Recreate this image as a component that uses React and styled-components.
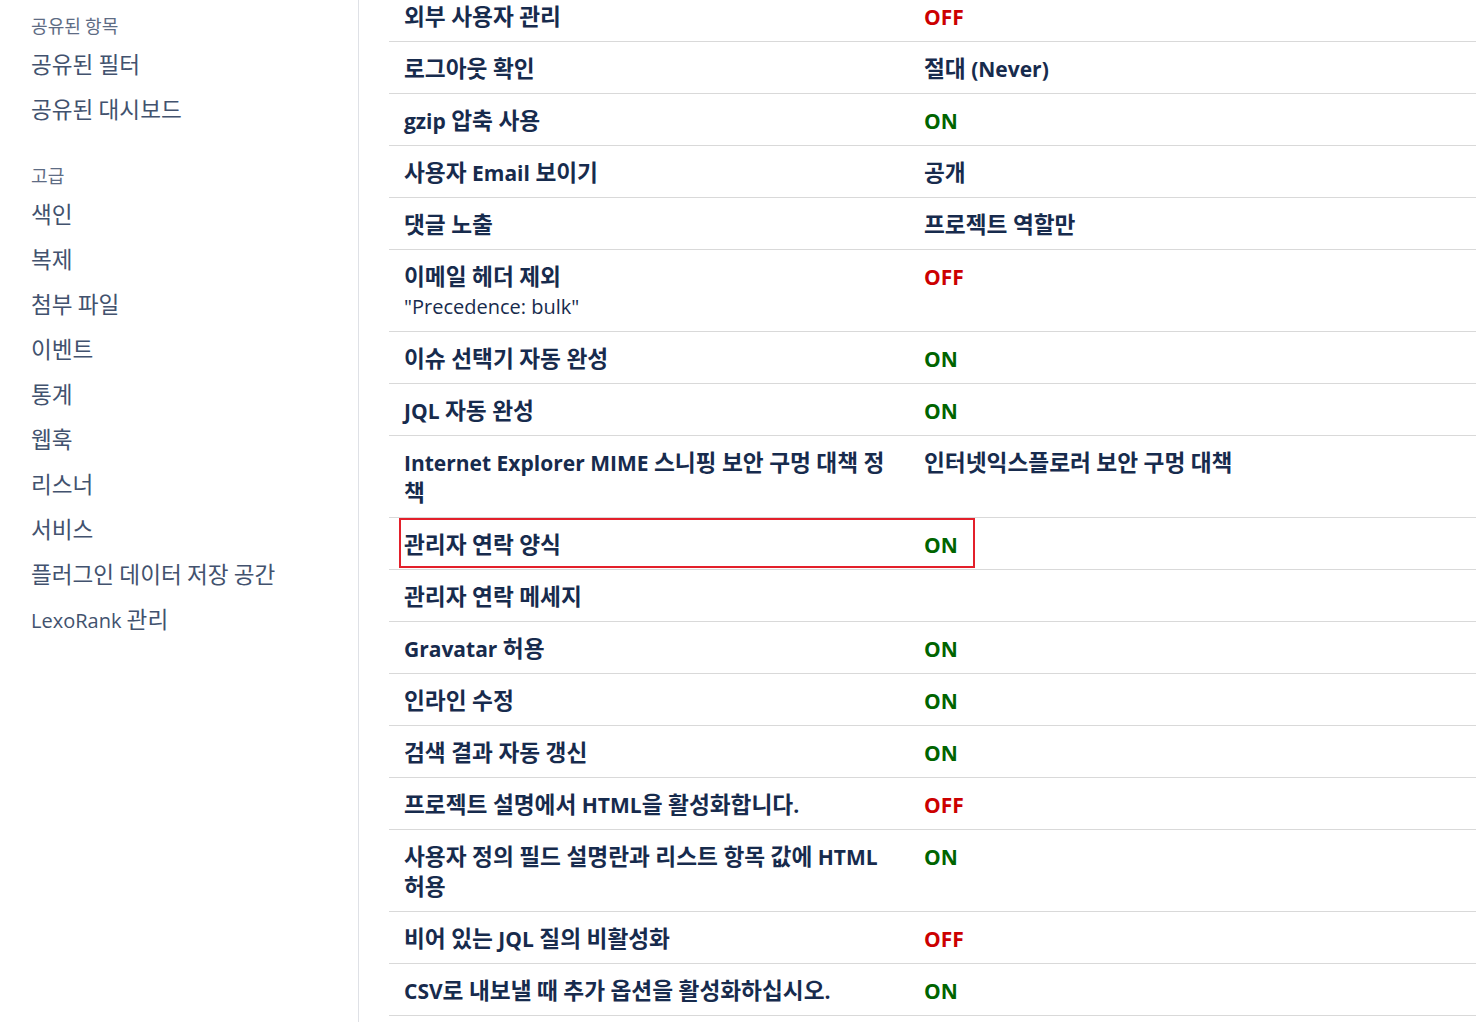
import React from "react";
import styled, { createGlobalStyle } from "styled-components";

const GlobalStyle = createGlobalStyle`
  html, body {
    margin: 0;
    padding: 0;
    background: #fff;
    overflow: hidden;
  }
  body {
    font-family: "Open Sans", "Noto Sans CJK KR", sans-serif;
    color: #172b4d;
  }
`;

const Page = styled.div`
  display: flex;
  align-items: stretch;
  min-height: 1022px;
`;

const Sidebar = styled.nav`
  width: 359px;
  flex: none;
  border-right: 1px solid #dfe1e6;
  padding: 16px 0 0 31px;
  box-sizing: border-box;
`;

const Group = styled.div`
  margin-bottom: ${(p) => p.gap || 0}px;
`;

const GroupTitle = styled.div`
  font-size: 16px;
  line-height: 22px;
  color: #5e6c84;
  margin-bottom: 5px;
`;

const NavItem = styled.a`
  display: block;
  font-size: 20px;
  line-height: 45px;
  color: #42526e;
  text-decoration: none;
  cursor: pointer;
`;

// Hangul runs are drawn a little larger, as the reference's Korean face is wider
const Ko = styled.span`
  font-family: "Noto Sans CJK KR", sans-serif;
  font-size: var(--ko, 1.13em);
  line-height: 0;
`;

const Main = styled.main`
  flex: 1;
  padding-left: 30px;
  min-width: 0;
`;

const Table = styled.div`
  margin-top: -10px;
`;

const Row = styled.div`
  position: relative;
  display: grid;
  grid-template-columns: 520px 1fr;
  border-bottom: 1px solid #d9d9d9;

  ${(p) =>
    p.marked &&
    `
    &::after {
      content: "";
      position: absolute;
      left: 10px;
      top: 0;
      width: 576px;
      height: 50px;
      border: 2px solid #e3202b;
      box-sizing: border-box;
      pointer-events: none;
    }
  `}
`;

const Label = styled.div`
  --ko: 1.08em;
  padding: 12px 17px 9px 15px;
  font-size: 21px;
  line-height: 30px;
  font-weight: 700;
  color: #172b4d;
`;

const Note = styled.div`
  font-weight: 400;
  font-size: 20px;
`;

const Value = styled.div`
  --ko: 1.08em;
  padding: 12px 15px 9px 15px;
  font-size: 21px;
  line-height: 30px;
  font-weight: 700;
  color: ${(p) => (p.state === "on" ? "#006400" : p.state === "off" ? "#cc0000" : "#172b4d")};
`;

const nav = [
  {
    title: "공유된 항목",
    gap: 33,
    items: ["공유된 필터", "공유된 대시보드"],
  },
  {
    title: "고급",
    items: [
      "색인",
      "복제",
      "첨부 파일",
      "이벤트",
      "통계",
      "웹훅",
      "리스너",
      "서비스",
      "플러그인 데이터 저장 공간",
      "LexoRank 관리",
    ],
  },
];

const settings = [
  { label: "외부 사용자 관리", value: "OFF" },
  { label: "로그아웃 확인", value: "절대 (Never)" },
  { label: "gzip 압축 사용", value: "ON" },
  { label: "사용자 Email 보이기", value: "공개" },
  { label: "댓글 노출", value: "프로젝트 역할만" },
  { label: "이메일 헤더 제외", note: "\"Precedence: bulk\"", value: "OFF" },
  { label: "이슈 선택기 자동 완성", value: "ON" },
  { label: "JQL 자동 완성", value: "ON" },
  { label: "Internet Explorer MIME 스니핑 보안 구멍 대책 정책", value: "인터넷익스플로러 보안 구멍 대책" },
  { label: "관리자 연락 양식", value: "ON", marked: true },
  { label: "관리자 연락 메세지", value: "" },
  { label: "Gravatar 허용", value: "ON" },
  { label: "인라인 수정", value: "ON" },
  { label: "검색 결과 자동 갱신", value: "ON" },
  { label: "프로젝트 설명에서 HTML을 활성화합니다.", value: "OFF" },
  { label: "사용자 정의 필드 설명란과 리스트 항목 값에 HTML 허용", value: "ON" },
  { label: "비어 있는 JQL 질의 비활성화", value: "OFF" },
  { label: "CSV로 내보낼 때 추가 옵션을 활성화하십시오.", value: "ON" },
];

function stateOf(value) {
  if (value === "ON") return "on";
  if (value === "OFF") return "off";
  return "text";
}

function Txt({ children }) {
  const parts = String(children).split(/([\uAC00-\uD7A3\u3131-\u318E]+)/);
  return parts.map((part, i) =>
    i % 2 === 1 ? <Ko key={i}>{part}</Ko> : part
  );
}

export default function App() {
  return (
    <>
      <GlobalStyle />
      <Page>
        <Sidebar>
          {nav.map((group) => (
            <Group key={group.title} gap={group.gap}>
              <GroupTitle><Txt>{group.title}</Txt></GroupTitle>
              {group.items.map((item) => (
                <NavItem key={item}><Txt>{item}</Txt></NavItem>
              ))}
            </Group>
          ))}
        </Sidebar>
        <Main>
          <Table>
            {settings.map((s) => (
              <Row key={s.label} marked={s.marked}>
                <Label>
                  <Txt>{s.label}</Txt>
                  {s.note && <Note>{s.note}</Note>}
                </Label>
                <Value state={stateOf(s.value)}><Txt>{s.value}</Txt></Value>
              </Row>
            ))}
          </Table>
        </Main>
      </Page>
    </>
  );
}
